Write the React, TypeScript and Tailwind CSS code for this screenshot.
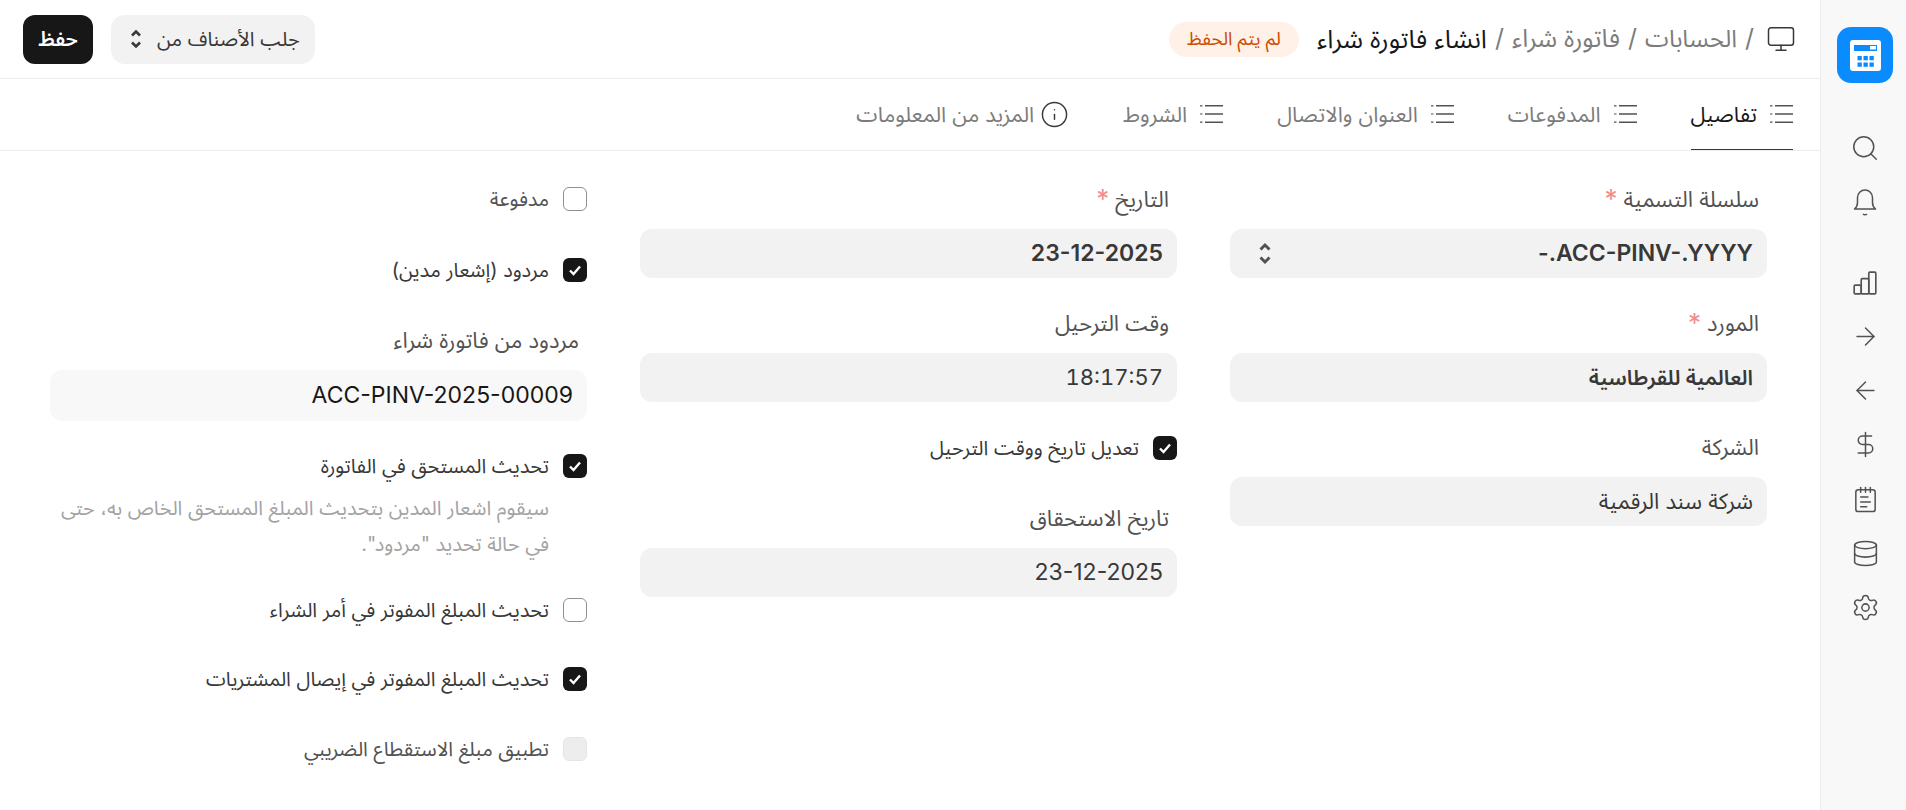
import { ArrowLeft, ArrowRight, Database, DollarSign, Info, Monitor, NotepadText, Search, Settings } from 'lucide-react';

function ListIcon() {
  return (
    <svg width="24" height="24" viewBox="0 0 24 24" fill="none" stroke="#525252" strokeWidth="1.5" className="shrink-0">
      <path d="M6 3.8h18M6 12h18M6 20.2h18" />
      <path d="M1 3.8h2.5M1 12h2.5M1 20.2h2.5" strokeWidth="1.2" />
    </svg>
  );
}

function Updown({ big, className }: { big?: boolean; className: string }) {
  return (
    <svg width={big ? 16 : 14} height={big ? 27 : 24} viewBox="0 0 14 24" fill="none" stroke="currentColor" strokeWidth="2.6" className={className}>
      <path d="M3 8.5 7 4.500l4 4M3 15.500l4 4 4-4" />
    </svg>
  );
}

function Bell() {
  return (
    <svg width="24" height="28" viewBox="0 0 24 28" fill="none" stroke="#525252" strokeWidth="1.5">
      <path d="M1.500 21c2-1.500 3-3.500 3-6.500V9.500a7.500 7.500 0 0 1 15 0v5c0 3 1 5 3 6.500z" strokeLinejoin="round" />
      <path d="M10 26c1 1 3 1 4 0" />
    </svg>
  );
}

function Bars() {
  return (
    <svg width="26" height="26" viewBox="0 0 24 24" fill="none" stroke="#525252" strokeWidth="1.5" strokeLinejoin="round" className="my-[1.5px]">
      <rect x="2" y="14" width="6.500" height="8" rx="1" />
      <rect x="8.500" y="8" width="7" height="14" rx="1" />
      <rect x="15.500" y="2" width="6.500" height="20" rx="1" />
    </svg>
  );
}

function Logo() {
  return (
    <div className="flex h-14 w-14 items-center justify-center rounded-[14px] bg-[#0a8cff]">
      <svg width="31" height="31" viewBox="0 0 31 31">
        <rect width="31" height="31" rx="3" fill="#fff" />
        <rect x="4" y="5" width="23" height="6" fill="#0a8cff" />
        <rect x="20" y="6" width="6" height="3.500" fill="#fff" />
        {[16, 22.5].map((y) =>
          [7.5, 13.5, 19.5].map((x) => <rect key={`${x}${y}`} x={x} y={y} width="4.300" height="4.300" fill="#0a8cff" />),
        )}
      </svg>
    </div>
  );
}

function Check({ on, disabled }: { on?: boolean; disabled?: boolean }) {
  if (disabled) return <span className="h-6 w-6 shrink-0 rounded-md border border-[#e5e5e5] bg-[#ededed]" />;
  if (!on) return <span className="h-6 w-6 shrink-0 rounded-md border border-[#8f8f8f] bg-white" />;
  return (
    <span className="flex h-6 w-6 shrink-0 items-center justify-center rounded-md bg-[#171717]">
      <svg width="14" height="14" viewBox="0 0 14 14" fill="none" stroke="#fff" strokeWidth="2.4">
        <path d="M2 7.500 5.500 11 12 3.500" />
      </svg>
    </span>
  );
}

type FieldProps = {
  label: string;
  value: string;
  req?: boolean;
  bold?: boolean;
  select?: boolean;
  latin?: boolean;
  tabular?: boolean;
  readOnly?: boolean;
  className?: string;
};

function Field({ label, value, req, bold, select, latin, tabular, readOnly, className = '' }: FieldProps) {
  return (
    <div className={className}>
      <div className="flex h-6 items-center gap-1.5 pr-2 text-[22px] text-[#525252]">
        <span>{label}</span>
        {req && <span className="text-[26px] leading-none text-[#f28b8b]">*</span>}
      </div>
      <div
        className={`mt-[18px] flex items-center justify-between rounded-[12px] px-3.5 ${tabular ? 'text-[22px] tabular-nums' : latin ? 'text-[23px]' : bold ? 'text-[21px]' : 'text-[22px]'} ${
          bold ? 'font-semibold' : ''
        } ${readOnly ? 'h-[51px] bg-[#f8f8f8] text-[#171717]' : 'h-[49px] bg-[#f2f2f2] text-[#383838]'}`}
      >
        <span>{value}</span>
        {select && <Updown big className="ml-[13px] text-[#525252]" />}
      </div>
    </div>
  );
}

function CheckRow({ label, on, disabled, muted, className = '' }: { label: string; on?: boolean; disabled?: boolean; muted?: boolean; className?: string }) {
  return (
    <div className={`flex h-6 items-center gap-3.5 text-[20px] ${muted ? 'text-[#525252]' : 'text-[#383838]'} ${className}`}>
      <Check on={on} disabled={disabled} />
      <span>{label}</span>
    </div>
  );
}

function Tab({ label, active, info }: { label: string; active?: boolean; info?: boolean }) {
  return (
    <div className={`flex h-[71px] items-center gap-3 border-b text-[21.5px] ${active ? 'border-[#383838] text-[#171717]' : 'border-transparent text-[#7c7c7c]'}`}>
      {info ? <Info size={29} strokeWidth={1.2} color="#383838" className="-ml-1.5" /> : <ListIcon />}
      <span>{label}</span>
    </div>
  );
}

export default function App() {
  return (
    <div dir="rtl" className="flex h-[810px] w-[1906px] overflow-hidden bg-white font-['Inter','Noto_Sans_Arabic','Noto_Sans','DejaVu_Sans',sans-serif]">
      <aside className="flex w-[86px] shrink-0 flex-col items-center border-l border-[#ededed] bg-[#f8f8f8] pl-[3px] pt-[27px] text-[#525252]">
        <Logo />
        <div className="mt-[50px] flex flex-col items-center gap-[25px]">
          <Search size={30} strokeWidth={1.2} />
          <Bell />
        </div>
        <div className="mt-[52px] flex flex-col items-center gap-[25px]">
          <Bars />
          <ArrowRight size={29} strokeWidth={1.25} />
          <ArrowLeft size={29} strokeWidth={1.25} />
          <DollarSign size={29} strokeWidth={1.25} />
          <NotepadText size={29} strokeWidth={1.25} className="mt-px" />
          <Database size={29} strokeWidth={1.25} />
          <Settings size={29} strokeWidth={1.25} />
        </div>
      </aside>

      <main className="min-w-0 flex-1">
        <header className="flex h-[79px] items-center justify-between border-b border-[#ededed] pl-[23px] pr-6">
          <div className="flex items-center gap-2 text-[25px] text-[#7c7c7c]">
            <Monitor size={30} strokeWidth={1.2} color="#383838" className="ml-1" />
            <span>/</span>
            <span className="text-[24px]">الحسابات</span>
            <span>/</span>
            <span>فاتورة شراء</span>
            <span>/</span>
            <span className="text-[25.5px] text-[#171717]">انشاء فاتورة شراء</span>
            <span className="mr-2.5 flex h-[35px] items-center rounded-full bg-[#fff1e7] px-[18px] text-[18.5px] text-[#cc4c00]">لم يتم الحفظ</span>
          </div>
          <div className="flex items-center gap-[18px]">
            <button className="flex h-[49px] items-center gap-3.5 rounded-[14px] bg-[#f2f2f2] pl-[18px] pr-[15px] text-[20px] text-[#383838]">
              <span>جلب الأصناف من</span>
              <Updown className="text-[#383838]" />
            </button>
            <button className="h-[49px] w-[70px] rounded-[12px] bg-[#171717] text-[20px] font-semibold text-white">حفظ</button>
          </div>
        </header>

        <nav className="flex h-[72px] gap-[54px] border-b border-[#ededed] pr-[27px]">
          <Tab label="تفاصيل" active />
          <Tab label="المدفوعات" />
          <Tab label="العنوان والاتصال" />
          <Tab label="الشروط" />
          <Tab label="المزيد من المعلومات" info />
        </nav>

        <section className="grid grid-cols-3 gap-x-[53px] pl-[50px] pr-[53px] pt-9">
          <div className="flex flex-col gap-[33px]">
            <Field label="سلسلة التسمية" value="ACC-PINV-.YYYY.-" req bold select latin />
            <Field label="المورد" value="العالمية للقرطاسية" req bold />
            <Field label="الشركة" value="شركة سند الرقمية" />
          </div>
          <div className="flex flex-col">
            <Field label="التاريخ" value="23-12-2025" req bold latin />
            <Field label="وقت الترحيل" value="18:17:57" tabular className="mt-[33px]" />
            <CheckRow label="تعديل تاريخ ووقت الترحيل" on className="mt-[34px]" />
            <Field label="تاريخ الاستحقاق" value="23-12-2025" latin className="mt-[46px]" />
          </div>
          <div className="flex flex-col">
            <CheckRow label="مدفوعة" muted />
            <CheckRow label="مردود (إشعار مدين)" on className="mt-[47px]" />
            <Field label="مردود من فاتورة شراء" value="ACC-PINV-2025-00009" latin readOnly className="mt-[46px]" />
            <CheckRow label="تحديث المستحق في الفاتورة" on className="mt-[33px]" />
            <p className="mr-[38px] mt-[12px] text-[20px] leading-9 text-[#a3a3a3]">سيقوم اشعار المدين بتحديث المبلغ المستحق الخاص به، حتى في حالة تحديد "مردود".</p>
            <CheckRow label="تحديث المبلغ المفوتر في أمر الشراء" className="mt-9" />
            <CheckRow label="تحديث المبلغ المفوتر في إيصال المشتريات" on className="mt-[45px]" />
            <CheckRow label="تطبيق مبلغ الاستقطاع الضريبي" disabled muted className="mt-[46px]" />
          </div>
        </section>
      </main>
    </div>
  );
}
